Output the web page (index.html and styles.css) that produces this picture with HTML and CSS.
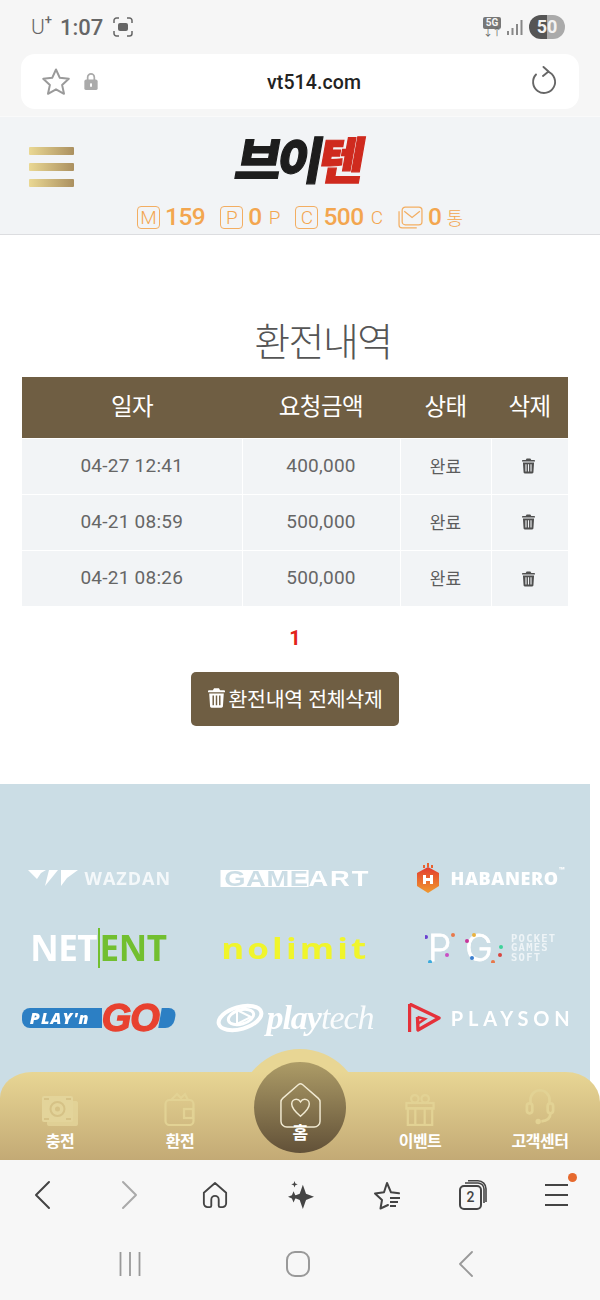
FILE: index.html
```html
<!DOCTYPE html>
<html lang="ko">
<head>
<meta charset="utf-8">
<title>환전내역</title>
<link rel="stylesheet" href="styles.css">
</head>
<body>
<svg class="defs" width="0" height="0" aria-hidden="true">
  <symbol id="trash" viewBox="0 0 14 16"><path fill="currentColor" fill-rule="evenodd" d="M5 0h4l1 1.600h3.200c.5 0 .8.300.8.800v.8H0v-.8c0-.5.300-.8.800-.8H4zM1 4.200h12l-.7 10.600c0 .7-.6 1.200-1.200 1.200H2.900c-.6 0-1.200-.5-1.200-1.200zM3.700 6v8h1.200V6zm2.700 0v8h1.200V6zm2.700 0v8h1.200V6z"/></symbol>
</svg>

<div class="status">
  <div class="status-left">
    <span class="carrier">U<sup>+</sup></span><span class="clock">1:07</span>
    <svg class="shot" viewBox="0 0 20 20" width="20" height="20"><path d="M1 6V3.500A2.500 2.500 0 0 1 3.500 1H6M14 1h2.500A2.500 2.500 0 0 1 19 3.500V6M19 14v2.500a2.500 2.500 0 0 1-2.500 2.500H14M6 19H3.500A2.500 2.500 0 0 1 1 16.500V14" fill="none" stroke="#666" stroke-width="1.500"/><rect x="5" y="6" width="10" height="8" rx="2" fill="#666"/></svg>
  </div>
  <div class="status-right">
    <span class="net"><b>5G</b><i>↓↑</i></span>
    <svg class="signal" viewBox="0 0 16 16" width="16" height="16"><g fill="#888"><rect x="0" y="12" width="2" height="4"/><rect x="4.500" y="9" width="2" height="7"/><rect x="9" y="5" width="2" height="11"/><rect x="13.500" y="1" width="2" height="15"/></g></svg>
    <span class="battery">50</span>
  </div>
</div>

<div class="urlwrap">
  <div class="urlbar">
    <svg viewBox="0 0 30 30" width="30" height="30"><path d="M15 2.500l3.800 8.300 9 1-6.700 6.100 1.900 8.900L15 22.300l-8 4.500 1.900-8.900L2.200 11.800l9-1z" fill="none" stroke="#9a9a9a" stroke-width="2" stroke-linejoin="round"/></svg>
    <svg class="lock" viewBox="0 0 14 20" width="14" height="19"><path d="M3.500 9V5.500a3.500 3.500 0 0 1 7 0V9" fill="none" stroke="#aaa" stroke-width="1.800"/><rect y="8" width="14" height="11" rx="2" fill="#aaa"/><rect x="6" y="12" width="2" height="3.500" fill="#fff"/></svg>
    <span class="url">vt514.com</span>
    <svg viewBox="0 0 28 32" width="28" height="32"><path d="M18 5.700A11 11 0 1 1 6 8.500" fill="none" stroke="#666" stroke-width="1.900" stroke-linecap="round"/><path d="M13.500 1L18.500 5.500 13 10" fill="none" stroke="#666" stroke-width="1.900" stroke-linecap="round" stroke-linejoin="round"/></svg>
  </div>
</div>

<header class="site-head">
  <div class="head-top">
    <div class="burger"><span></span><span></span><span></span></div>
    <div class="brand"><span>브이</span><em>텐</em></div>
  </div>
  <div class="wallet">
    <span class="metric"><i class="badge">M</i><b>159</b></span>
    <span class="metric"><i class="badge">P</i><b>0</b><small>P</small></span>
    <span class="metric"><i class="badge">C</i><b>500</b><small>C</small></span>
    <span class="metric">
      <svg viewBox="0 0 24 22" width="25" height="23"><g fill="none" stroke="#f3ae62" stroke-width="1.200"><path d="M1 5v13a3 3 0 0 0 3 3h14"/><rect x="4" y="1" width="19" height="17" rx="3"/><path d="M6 5l7.500 6L21 5"/></g></svg>
      <b>0</b><small class="kr">통</small>
    </span>
  </div>
</header>

<main class="content">
  <h1 class="title">환전내역</h1>
  <table class="history">
    <colgroup><col class="c1"><col class="c2"><col class="c3"><col class="c4"></colgroup>
    <thead><tr><th>일자</th><th>요청금액</th><th>상태</th><th>삭제</th></tr></thead>
    <tbody>
      <tr><td>04-27 12:41</td><td>400,000</td><td class="kr">완료</td><td><svg class="trash"><use href="#trash"/></svg></td></tr>
      <tr><td>04-21 08:59</td><td>500,000</td><td class="kr">완료</td><td><svg class="trash"><use href="#trash"/></svg></td></tr>
      <tr><td>04-21 08:26</td><td>500,000</td><td class="kr">완료</td><td><svg class="trash"><use href="#trash"/></svg></td></tr>
    </tbody>
  </table>
  <div class="pager">1</div>
  <div class="action"><button class="clear" type="button"><svg class="trash-btn"><use href="#trash"/></svg>환전내역 전체삭제</button></div>
</main>

<section class="stage">
  <div class="providers">
    <div class="logo wazdan">
      <svg viewBox="0 0 50 16" width="50" height="16"><g fill="#fff"><path d="M0 0h18l-5 3-4 6z"/><path d="M17 16L21 0h9z"/><path d="M33 0h17l-11 8-6 8z"/></g></svg>
      <span>WAZDAN</span>
    </div>
    <div class="logo gameart"><span class="ga-box">GAME</span><span class="ga-art">ART</span></div>
    <div class="logo habanero">
      <svg viewBox="0 0 24 30" width="24" height="30"><defs><linearGradient id="hb" x1="0" y1="0" x2="0" y2="1"><stop offset="0" stop-color="#e33b2f"/><stop offset="1" stop-color="#f09a2f"/></linearGradient></defs><path d="M12 4l11 6v13l-11 7-11-7V10z" fill="url(#hb)"/><rect x="11" y="0" width="2" height="4" fill="#e9622f"/><rect x="7" y="2" width="2" height="3" fill="#e9622f"/><rect x="15" y="2" width="2" height="3" fill="#e9622f"/><path d="M7 12h3v3h4v-3h3v9h-3v-3h-4v3H7z" fill="#fff"/></svg>
      <span>HABANERO<sup>™</sup></span>
    </div>
    <div class="logo netent"><span>NET</span><i></i><em>ENT</em></div>
    <div class="logo nolimit">nolimit</div>
    <div class="logo pg">
      <span class="pg-mark">PG
        <svg class="pg-dots" viewBox="0 0 80 30" width="80" height="30"><circle cx="1" cy="4" r="2" fill="#6a3fd0"/><circle cx="28" cy="2" r="2" fill="#e8784a"/><circle cx="5" cy="29" r="2" fill="#39a9dc"/><circle cx="22" cy="22" r="2" fill="#c94fc4"/><circle cx="42" cy="8" r="2" fill="#c8349a"/><circle cx="49" cy="2" r="2" fill="#e9b23f"/><circle cx="76" cy="14" r="2" fill="#3fd29a"/><circle cx="75" cy="22" r="2" fill="#d9453f"/><circle cx="47" cy="25" r="2" fill="#3a7fd0"/><circle cx="68" cy="29" r="2" fill="#e8784a"/></svg>
      </span>
      <span class="pg-words">POCKET<br>GAMES<br>SOFT</span>
    </div>
    <div class="logo playngo">
      <span class="png-pill">PLAY'n</span><span class="png-go">GO</span><span class="png-end"></span>
    </div>
    <div class="logo playtech">
      <svg viewBox="0 0 48 32" width="48" height="32"><g fill="none" stroke="#fff"><ellipse cx="24" cy="16" rx="22" ry="11" stroke-width="4" transform="rotate(-16 24 16)"/><ellipse cx="25" cy="15" rx="13" ry="7" stroke-width="3" transform="rotate(-16 25 15)"/></g><path d="M21 8l14 7-14 7z" fill="#cbdde5" stroke="#fff" stroke-width="2"/></svg>
      <span class="pt-a">play</span><span class="pt-b">tech</span>
    </div>
    <div class="logo playson">
      <svg viewBox="0 0 33 30" width="33" height="30"><path d="M1.500 1L31 15 10 27l-.5-13" fill="none" stroke="#e5313a" stroke-width="3.400" stroke-linejoin="round"/><path d="M1.500 1v28" stroke="#e5313a" stroke-width="3.400"/><path d="M9.500 14l7.500 2-7.500 5" fill="none" stroke="#e5313a" stroke-width="2.400"/></svg>
      <span>PLAYSON</span>
    </div>
  </div>

  <nav class="tabbar">
    <div class="bump"></div>
    <div class="tabs">
      <a class="tab">
        <svg viewBox="0 0 36 30" width="36" height="30"><g fill="#e3d49a"><rect x="5" y="5" width="31" height="25" rx="2" opacity=".8"/><rect x="0" y="0" width="31" height="26" rx="2"/></g><circle cx="15.500" cy="13" r="7" fill="none" stroke="#d6c286" stroke-width="2"/><circle cx="15.500" cy="13" r="2.500" fill="#d6c286"/><path d="M2 3h5M24 3h5M2 23h5M24 23h5" stroke="#d6c286" stroke-width="2"/></svg>
        <span>충전</span>
      </a>
      <a class="tab">
        <svg viewBox="0 0 32 34" width="32" height="34"><g fill="none" stroke="#e2d294" stroke-width="2.200"><rect x="1.500" y="8" width="28" height="25" rx="4"/><path d="M7 8l6-6 4 4 4-4 3 6"/><rect x="20" y="17" width="9" height="9"/></g></svg>
        <span>환전</span>
      </a>
      <a class="tab tab-home">
        <span class="home-disc">
          <svg viewBox="0 0 44 48" width="43" height="47"><path d="M4 16.500L20 2.500c1.200-1 2.800-1 4 0l16 14c1.300 1.100 2 2.400 2 4V40c0 3.300-2.700 6-6 6H8c-3.300 0-6-2.700-6-6V20.500c0-1.600.7-2.900 2-4z" fill="none" stroke="#f1ead2" stroke-width="1.500"/><path d="M22 35c-6-5-9-8.500-9-12.500 0-3 2.200-5 4.700-5 1.800 0 3.300 1 4.300 2.700 1-1.700 2.500-2.700 4.300-2.700 2.500 0 4.700 2 4.700 5 0 4-3 7.500-9 12.500z" fill="none" stroke="#f1ead2" stroke-width="1.500"/></svg>
          <span>홈</span>
        </span>
      </a>
      <a class="tab">
        <svg viewBox="0 0 32 34" width="30" height="32"><g fill="none" stroke="#e2d294" stroke-width="2.400"><rect x="3" y="15" width="26" height="18"/><rect x="1.500" y="9.500" width="29" height="6"/><path d="M11 15v18M21 15v18"/><circle cx="10.500" cy="5" r="4"/><circle cx="21.500" cy="5" r="4"/></g></svg>
        <span>이벤트</span>
      </a>
      <a class="tab">
        <svg viewBox="0 0 32 42" width="30" height="38"><g fill="none" stroke="#e2d294" stroke-width="3"><path d="M5.500 17V13a10.500 10.500 0 0 1 21 0v4"/><rect x="1.500" y="17" width="6" height="11" rx="3"/><rect x="24.500" y="17" width="6" height="11" rx="3"/><path d="M27.500 28c0 6-4 8.500-10 9"/></g><circle cx="14" cy="37" r="3" fill="#e2d294"/></svg>
        <span>고객센터</span>
      </a>
    </div>
  </nav>
</section>

<div class="browser-tools">
  <svg viewBox="0 0 20 32" width="20" height="32"><path d="M16 3L3 16l13 13" fill="none" stroke="#444" stroke-width="2" stroke-linecap="round" stroke-linejoin="round"/></svg>
  <svg viewBox="0 0 20 32" width="20" height="32"><path d="M4 3l13 13L4 29" fill="none" stroke="#aaa" stroke-width="2" stroke-linecap="round" stroke-linejoin="round"/></svg>
  <svg viewBox="0 0 28 30" width="26" height="28"><path d="M2 12.500L14 2l12 10.500V24a4 4 0 0 1-4 4h-2.500c-.8 0-1.500-.7-1.500-1.500V20a4 4 0 0 0-8 0v6.500c0 .8-.7 1.500-1.500 1.500H6a4 4 0 0 1-4-4z" fill="none" stroke="#444" stroke-width="2" stroke-linejoin="round"/></svg>
  <svg viewBox="0 0 28 30" width="26" height="28"><g fill="#444"><path d="M16 4l3.400 9.600L28 17l-8.600 3.400L16 30l-3.400-9.600L4 17l8.600-3.400z"/><path d="M6 11l1.800 4.200L12 17l-4.200 1.800L6 23l-1.800-4.200L0 17l4.200-1.800z"/><path d="M7 0l.9 2.600 2.600.9-2.600.9L7 7l-.9-2.600-2.600-.9 2.600-.9z"/></g></svg>
  <svg viewBox="0 0 30 30" width="30" height="30"><path d="M16 25l-7.500 3.500L10 20 3 13.500l9-1.200L15 3l4 9.300 8 1" fill="none" stroke="#444" stroke-width="2" stroke-linejoin="round" stroke-linecap="round"/><path d="M18 18h10M18 22h8M18 26h6" stroke="#444" stroke-width="2"/></svg>
  <span class="tabs-count">
    <svg viewBox="0 0 28 30" width="28" height="30"><rect x="1" y="6" width="21" height="23" rx="4" fill="none" stroke="#444" stroke-width="2"/><path d="M6 3h13a6 6 0 0 1 6 6v14M9 .8h10a8 8 0 0 1 8 8V22" fill="none" stroke="#444" stroke-width="1.600"/></svg>
    <b>2</b>
  </span>
  <span class="menu-icon"><i></i><i></i><i></i><em></em></span>
</div>

<div class="system-nav">
  <svg viewBox="0 0 22 26" width="22" height="26"><path d="M1.500 1v24M11 1v24M20.500 1v24" stroke="#999" stroke-width="1.800"/></svg>
  <svg class="sys-home" viewBox="0 0 24 26" width="24" height="26"><rect x="1" y="1" width="22" height="24" rx="8" fill="none" stroke="#999" stroke-width="2"/></svg>
  <svg viewBox="0 0 16 26" width="16" height="26"><path d="M14 1L2 13l12 12" fill="none" stroke="#999" stroke-width="1.800" stroke-linecap="round" stroke-linejoin="round"/></svg>
</div>
</body>
</html>
```

FILE: styles.css
```css
* { box-sizing: border-box; }
html, body { margin: 0; padding: 0; }
body {
  width: 600px;
  height: 1300px;
  overflow: hidden;
  background: #fff;
  color: #555;
  font-family: Roboto, "Noto Sans CJK KR", sans-serif;
  display: flex;
  flex-direction: column;
}
.defs { position: absolute; }
.kr { font-family: "Noto Sans CJK KR", sans-serif; }

/* phone status bar */
.status {
  height: 54px;
  flex: none;
  background: #f6f6f6;
  padding: 0 35px 0 31px;
  display: flex;
  align-items: center;
  justify-content: space-between;
}
.status-left { display: flex; align-items: center; color: #666; }
.carrier { font-size: 21px; font-weight: 300; line-height: 1; margin-right: 8px; display: flex; }
.carrier sup { font-size: 13px; font-weight: 500; line-height: 1; margin-top: -4px; }
.clock { font-size: 22px; font-weight: 500; margin-right: 10px; }
.status-right { display: flex; align-items: center; gap: 6px; }
.net { display: flex; flex-direction: column; align-items: center; width: 18px; line-height: 1; }
.net b { background: #777; color: #f6f6f6; font-size: 10px; width: 18px; text-align: center; border-radius: 2px; height: 12px; line-height: 12px; }
.net i { font-style: normal; font-size: 10px; height: 8px; line-height: 8px; color: #666; letter-spacing: -1px; }
.battery {
  width: 36px;
  height: 24px;
  border-radius: 12px;
  background: linear-gradient(90deg, #555 50%, #aaa 50%);
  color: #f2f2f2;
  font-size: 18px;
  font-weight: 700;
  line-height: 24px;
  text-align: center;
}

/* browser url bar */
.urlwrap {
  height: 63px;
  flex: none;
  background: #f6f6f6;
  padding: 0 21px 7px;
  border-bottom: 1px solid #fafafa;
}
.urlbar {
  height: 55px;
  background: #fff;
  border-radius: 14px;
  padding: 0 21px 0 20px;
  display: flex;
  align-items: center;
}
.lock { margin-left: 13px; }
.url { flex: 1; text-align: center; color: #222; font-size: 19.500px; font-weight: 500; letter-spacing: .1px; padding-top: 2px; }

/* site header */
.site-head {
  height: 118px;
  flex: none;
  background: #f2f4f6;
  border-bottom: 1px solid #dcdde0;
  padding: 19px 0 0;
}
.head-top { display: flex; align-items: center; height: 52px; padding-left: 29px; }
.burger { width: 45px; display: flex; flex-direction: column; gap: 8px; margin-top: 10px; }
.burger span { height: 8px; border-radius: 1px; background: linear-gradient(90deg, #ead893, #ab9060); }
.brand {
  margin: -10px 0 0 163px;
  font-family: "Noto Sans CJK KR", sans-serif;
  font-weight: 900;
  font-size: 50px;
  line-height: 52px;
  letter-spacing: -4.500px;
  color: #1d1d1d;
  -webkit-text-stroke: 1.200px currentColor;
  transform: skewX(-10deg);
  white-space: nowrap;
}
.brand em { font-style: normal; color: #cf2a1e; }
.wallet {
  display: flex;
  justify-content: center;
  gap: 15px;
  margin-top: 16px;
  color: #f3a64f;
  height: 26px;
  align-items: center;
}
.metric { display: flex; align-items: center; gap: 5px; }
.metric b { font-size: 24.500px; font-weight: 500; line-height: 26px; letter-spacing: -.5px; }
.metric small { font-size: 19px; font-weight: 300; margin-left: 2px; }
.metric small.kr { font-size: 18px; margin-left: 0; }
.badge {
  width: 23px;
  height: 23px;
  border: 1px solid #f3ae62;
  border-radius: 4px;
  font-style: normal;
  font-weight: 300;
  font-size: 19px;
  line-height: 21px;
  text-align: center;
}

/* content */
.content { height: 549px; flex: none; padding: 0 32px 0 22px; }
.title {
  margin: 79px 0 0;
  height: 63px;
  text-align: center;
  font-size: 39px;
  font-weight: 300;
  letter-spacing: -1.500px;
  line-height: 50px;
  color: #555;
  padding-left: 56px;
  font-family: "Noto Sans CJK KR", sans-serif;
}
.history { width: 546px; border-collapse: collapse; table-layout: fixed; }
.c1 { width: 220px; }
.c2 { width: 158px; }
.c3 { width: 91px; }
.c4 { width: 77px; }
.history th {
  height: 61px;
  padding: 0 0 3px;
  background: #6f5e43;
  color: #fff;
  font: 400 23.500px/1 "Noto Sans CJK KR", sans-serif;
  letter-spacing: -.5px;
}
.history td {
  height: 56px;
  padding: 0 0 2px;
  background: #f2f4f6;
  border: 1px solid #fff;
  text-align: center;
  font-size: 19px;
  font-weight: 400;
  color: #666;
  letter-spacing: .25px;
}
.history td.kr { font-size: 17px; letter-spacing: 0; color: #5c5c5c; }
.history tbody tr td:first-child { border-left: 0; }
.history tbody tr td:last-child { border-right: 0; padding-right: 2px; }
.history tr:last-child td { border-bottom: 0; }
.trash { width: 13px; height: 16px; color: #4f4f4f; vertical-align: middle; }
.pager { margin-top: 19px; height: 26px; width: 546px; text-align: center; color: #e2231a; font-size: 20px; font-weight: 700; line-height: 26px; }
.action { display: flex; justify-content: center; margin-top: 21px; width: 546px; }
.clear {
  width: 208px;
  height: 54px;
  padding: 0 0 2px;
  border: 0;
  border-radius: 5px;
  background: #6f5e43;
  color: #fff;
  font: 400 20.500px/1 "Noto Sans CJK KR", sans-serif;
  letter-spacing: -.3px;
  display: flex;
  align-items: center;
  justify-content: center;
  gap: 4px;
}
.trash-btn { width: 17px; height: 20px; color: #fff; }

/* provider logos */
.stage { height: 376px; flex: none; position: relative; }
.providers {
  width: 590px;
  height: 100%;
  background: #cbdde5;
  padding-top: 59px;
  display: grid;
  grid-template-columns: repeat(3, 1fr);
  grid-auto-rows: 70px;
  align-items: center;
  justify-items: center;
}
.logo { display: flex; align-items: center; color: #fff; filter: blur(.4px); white-space: nowrap; }
.wazdan { gap: 7px; font: 700 18px "Open Sans", sans-serif; letter-spacing: 1px; color: #f4f8fa; margin-left: 2px; }
.gameart { font: 700 22px "Liberation Sans", sans-serif; transform: scaleX(1.24); }
.ga-box { background: #fff; color: #cbdde5; padding: 0 0 0 3px; line-height: 17px; letter-spacing: .5px; }
.ga-art { letter-spacing: 1.500px; line-height: 17px; }
.habanero { gap: 11px; font: 800 18px "Open Sans", sans-serif; letter-spacing: .6px; margin-left: -3px; }
.habanero sup { font-size: 7px; line-height: 1; margin-top: -6px; vertical-align: top; }
.netent { font: 700 35px/36px "Open Sans", sans-serif; letter-spacing: -.5px; }
.netent i { width: 1.500px; height: 40px; background: #72bf2f; margin: 0 0 0 1px; }
.netent em { font-style: normal; color: #72bf2f; }
.nolimit { color: #f0f52b; font: 700 28px/1 "Open Sans", sans-serif; letter-spacing: 2.500px; transform: scaleX(1.25); }
.pg { gap: 6px; margin-left: -2px; }
.pg-mark {
  position: relative;
  display: block;
  width: 80px;
  font: 300 37px/30px "Inter", sans-serif;
  letter-spacing: 14px;
  padding-left: 3px;
  -webkit-text-stroke: .8px #fff;
}
.pg-dots { position: absolute; left: 0; top: 0; }
.pg-words { font: 700 10.500px/9.500px "DejaVu Sans Mono", monospace; letter-spacing: 1.200px; color: #eef4f7; }
.playngo { height: 32px; }
.png-pill {
  width: 80px;
  height: 20px;
  padding-left: 8px;
  background: #2c7fc4;
  border-radius: 8px 0 0 8px;
  font: italic 800 16px/20px "Open Sans", sans-serif;
  letter-spacing: 1.200px;
}
.png-go { color: #e8412f; font: italic 700 38px/32px "Liberation Sans", sans-serif; letter-spacing: -1px; -webkit-text-stroke: 1.400px #e8412f; }
.png-end { width: 15px; height: 20px; margin-left: 1px; background: #2c7fc4; border-radius: 0 8px 8px 0; transform: skewX(-10deg); }
.playtech { gap: 2px; font-family: "Liberation Serif", serif; font-size: 34px; line-height: 34px; font-style: italic; letter-spacing: -1px; }
.pt-a { font-weight: 700; }
.pt-b { font-weight: 400; opacity: .9; margin-left: -2px; }
.playson { gap: 10px; font: 700 20px "Lato", sans-serif; letter-spacing: 4.800px; margin-left: -1px; }

/* bottom tab bar */
.tabbar { position: absolute; left: 0; right: 0; bottom: 0; height: 88px; }
.bump { position: absolute; left: 238px; top: -23px; width: 124px; height: 62px; border-radius: 62px 62px 0 0; background: #e8d694; }
.tabs {
  position: relative;
  height: 100%;
  border-radius: 32px 34px 0 0 / 26px 30px 0 0;
  background: linear-gradient(180deg, #e8d694 0%, #c3aa75 100%);
  display: grid;
  grid-template-columns: repeat(5, 120px);
}
.tab {
  display: flex;
  flex-direction: column;
  align-items: center;
  justify-content: flex-end;
  padding-bottom: 10px;
  gap: 4px;
  color: #fff;
  font: 700 16px/20px "Noto Sans CJK KR", sans-serif;
  letter-spacing: -.5px;
}
.tab-home { position: relative; }
.home-disc {
  position: absolute;
  left: 14px;
  top: -10px;
  width: 92px;
  height: 91px;
  border-radius: 50%;
  background: linear-gradient(180deg, #ad9c67 0%, #625138 100%);
  display: flex;
  flex-direction: column;
  align-items: center;
  padding-top: 20px;
}
.home-disc span { line-height: 14px; margin-top: -4px; font-size: 17px; }

/* browser bottom bar */
.browser-tools {
  height: 76px;
  flex: none;
  background: #f7f7f7;
  display: grid;
  grid-template-columns: repeat(6, 86px) 80px;
  padding-bottom: 6px;
  justify-items: center;
  align-items: center;
}
.tabs-count { position: relative; display: flex; }
.tabs-count b { position: absolute; left: 1px; top: 6px; width: 21px; text-align: center; font-size: 14px; line-height: 23px; font-weight: 500; color: #444; }
.menu-icon { position: relative; width: 23px; display: flex; flex-direction: column; gap: 8px; }
.menu-icon i { height: 2px; background: #444; }
.menu-icon em { position: absolute; right: -9px; top: -11px; width: 9px; height: 9px; border-radius: 50%; background: #e6692e; }

/* android navigation */
.system-nav {
  height: 64px;
  flex: none;
  background: #f7f7f7;
  padding: 0 126px 8px 119px;
  display: flex;
  align-items: center;
  justify-content: space-between;
}
.sys-home { margin-right: 4px; }
```
